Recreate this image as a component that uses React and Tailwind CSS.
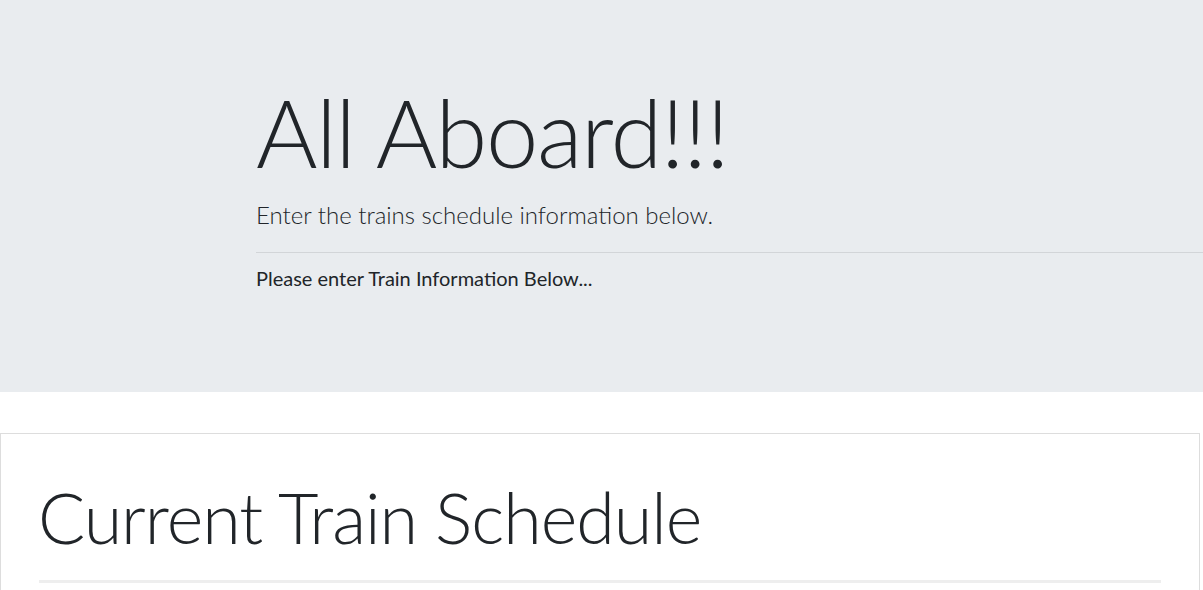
import React from "react";

// Train schedule landing: jumbotron header + schedule panel
function App() {
    return (
        <div className="h-[590px] overflow-hidden bg-white text-[#212529]" style={{ fontFamily: "Lato, 'Open Sans', sans-serif" }}>
            {/* Jumbotron */}
            <div className="h-[392px] bg-[#e9ecef] pl-[256px] pt-[85px] overflow-hidden">
                <h1 className="text-[94px] leading-[94px] font-light tracking-[-1.4px]">All Aboard!!!</h1>
                <p className="mt-[21px] text-[24px] leading-[29px] font-light">
                    Enter the trains schedule information below.
                </p>
                <hr className="mt-[23px] border-0 border-t border-[#d2d5d8]" />
                <p className="mt-[13px] text-[20px] leading-[24px]">Please enter Train Information Below...</p>
            </div>

            {/* Schedule panel */}
            <div className="mt-[41px] w-[1200px] border border-[#dddddd] pt-[41px] pb-[40px]">
                <h2 className="pl-[37px] text-[70px] leading-[84px] font-light tracking-[-1px]">Current Train Schedule</h2>
                <hr className="mx-[38px] mt-[21px] border-0 border-t-[3px] border-[#eeeeee]" />
            </div>
        </div>
    );
}

export default App;
